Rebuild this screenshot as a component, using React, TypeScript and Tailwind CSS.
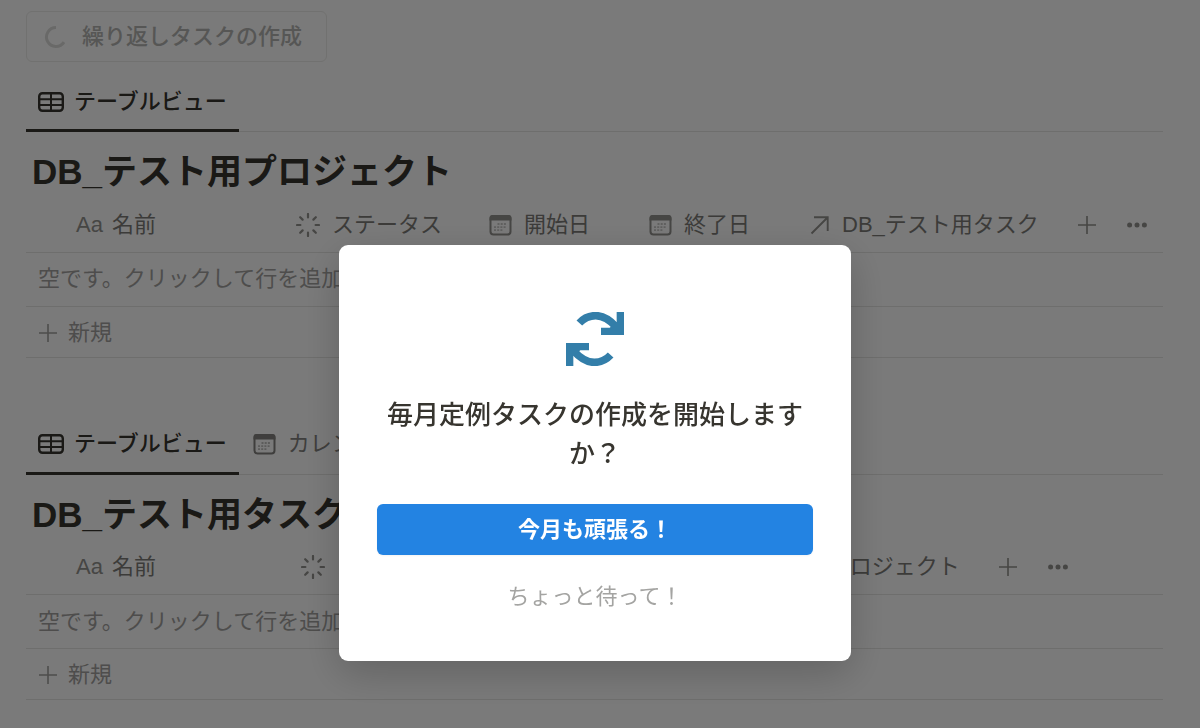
import type { ReactNode } from "react";

type Column = {
  label: string;
  icon: ReactNode;
  width: string;
};

function TableIcon() {
  return (
    <svg className="w-[26px] h-5 shrink-0" viewBox="0 0 26 20" fill="none" stroke="currentColor">
      <rect x="1.2" y="1.2" width="23.6" height="17.6" rx="3.2" strokeWidth={2.4} />
      <path d="M1.2 7.2h23.6M1.2 13h23.6M13 1.2v17.6" strokeWidth={2} />
    </svg>
  );
}

function CalendarIcon() {
  return (
    <svg className="w-[23px] h-[22px] shrink-0" viewBox="0 0 23 22" fill="none">
      <rect x="1.500" y="2" width="20" height="18.500" rx="3" stroke="currentColor" strokeWidth={2} />
      <path d="M0.500 6.500V4a3 3 0 013-3h16a3 3 0 013 3v2.500z" fill="currentColor" />
      <path d="M8.500 10h9M5 13.200h12.500M5 16.200h9" stroke="currentColor" strokeWidth={1.8} strokeDasharray="2 1.200" opacity={0.5} />
    </svg>
  );
}

function StatusIcon() {
  return (
    <svg className="size-6 shrink-0" viewBox="0 0 24 24" fill="none" stroke="currentColor" strokeWidth={2.2} strokeLinecap="round">
      <path d="M12 1v3.400M12 19.600V23M1 12h3.400M19.600 12H23M4.200 4.200l2.400 2.400M17.400 17.400l2.400 2.400M19.800 4.200l-2.400 2.400M6.600 17.400l-2.400 2.400" />
    </svg>
  );
}

function RelationIcon() {
  return (
    <svg className="size-5 shrink-0" viewBox="0 0 20 20" fill="none" stroke="currentColor" strokeWidth={1.9}>
      <path d="M1.500 18.500L17.500 2.500M4 2.300h13.700V16" />
    </svg>
  );
}

function PlusIcon() {
  return (
    <svg className="size-5 shrink-0" viewBox="0 0 20 20" fill="none" stroke="currentColor" strokeWidth={1.6}>
      <path d="M10 1v18M1 10h18" />
    </svg>
  );
}

function DotsIcon() {
  return (
    <svg className="w-5 h-[18px] shrink-0" viewBox="0 0 20 18" fill="currentColor">
      <circle cx="2.600" cy="9" r="2.500" />
      <circle cx="10" cy="9" r="2.500" />
      <circle cx="17.400" cy="9" r="2.500" />
    </svg>
  );
}

function SpinnerIcon() {
  return (
    <svg className="size-6 shrink-0" viewBox="0 0 24 24" fill="none" strokeWidth={3}>
      <path d="M12 2.500a9.500 9.500 0 108 14.600" stroke="#dcdcda" />
    </svg>
  );
}

function RepeatIcon() {
  return (
    <svg className="w-[58px] h-[54px] text-[#337ea9]" viewBox="0 0 174 162" fill="none">
      <g id="repeat-half">
        <path d="M40 33C54 18 70 11 89 11c24 0 42 12 62 34" stroke="currentColor" strokeWidth={23} />
        <path d="M152 0h22v69h-69V47h26l21-17z" fill="currentColor" />
      </g>
      <use href="#repeat-half" transform="rotate(180 87 81)" />
    </svg>
  );
}

const textIcon = <span className="w-6">Aa</span>;

const projectColumns: Column[] = [
  { label: "名前", icon: textIcon, width: "w-[258px]" },
  { label: "ステータス", icon: <StatusIcon />, width: "w-[193px]" },
  { label: "開始日", icon: <CalendarIcon />, width: "w-[160px]" },
  { label: "終了日", icon: <CalendarIcon />, width: "w-[161px]" },
  { label: "DB_テスト用タスク", icon: <RelationIcon />, width: "w-[265px]" },
];

const taskColumns: Column[] = [
  { label: "名前", icon: textIcon, width: "w-[263px]" },
  { label: "ステータス", icon: <StatusIcon />, width: "w-[364px]" },
  { label: "DB_テスト用プロジェクト", icon: <RelationIcon />, width: "w-[331px]" },
];

function Database({ title, columns, calendar }: { title: string; columns: Column[]; calendar?: boolean }) {
  return (
    <section>
      <nav className="flex h-[62px] border-b border-[#e6e6e4]">
        <button type="button" className="-mb-px flex items-center gap-2.5 border-b-[3px] border-[#37352f] px-3 pt-1 font-medium">
          <TableIcon />
          テーブルビュー
        </button>
        {calendar && (
          <button type="button" className="ml-0.5 flex items-center gap-3 px-3 pt-0.5 text-[#84837f]">
            <CalendarIcon />
            カレンダー
          </button>
        )}
      </nav>
      <h2 className="px-1.5 pt-[18px] pb-0.5 text-[35px] leading-[44px] font-bold">{title}</h2>
      <table className="w-full table-fixed border-collapse text-left">
        <thead>
          <tr className="h-14 border-b border-[#e6e6e4] text-[#7d7c78]">
            {columns.map((column, i) => (
              <th key={column.label} scope="col" className={`${column.width} pt-0.5 font-normal ${i === 0 ? "pl-[50px]" : "pl-3"}`}>
                <span className="flex items-center gap-3 whitespace-nowrap">
                  <span className="flex text-[#93928e]">{column.icon}</span>
                  {column.label}
                </span>
              </th>
            ))}
            <th scope="col" className="pt-0.5 pl-3.5 font-normal">
              <span className="flex items-center gap-[30px] text-[#93928e]">
                <button type="button" aria-label="プロパティを追加">
                  <PlusIcon />
                </button>
                <button type="button" aria-label="その他">
                  <DotsIcon />
                </button>
              </span>
            </th>
          </tr>
        </thead>
        <tbody className="text-[#a3a29f]">
          <tr className="h-[54px] border-b border-[#e6e6e4]">
            <td colSpan={columns.length + 1} className="pl-3">空です。クリックして行を追加</td>
          </tr>
          <tr className="h-[51px] border-b border-[#e6e6e4]">
            <td colSpan={columns.length + 1} className="pt-0.5 pl-3">
              <button type="button" className="flex items-center gap-2.5">
                <PlusIcon />
                新規
              </button>
            </td>
          </tr>
        </tbody>
      </table>
    </section>
  );
}

function ConfirmDialog() {
  return (
    <div className="fixed inset-0 flex items-start justify-center bg-black/52 pt-[245px] pr-2.5">
      <div
        role="dialog"
        aria-modal="true"
        aria-labelledby="confirm-title"
        className="flex w-[512px] flex-col items-center rounded-[9px] bg-white px-[38px] pt-[67px] pb-[42px] shadow-[0_12px_40px_rgba(0,0,0,0.2)]"
      >
        <RepeatIcon />
        <p id="confirm-title" className="mt-[30px] text-center text-[26px] leading-[39px] font-medium">
          毎月定例タスクの作成を開始しますか？
        </p>
        <button type="button" className="mt-[30px] h-[51px] w-full rounded-md bg-[#2383e2] font-bold text-white shadow-xs">
          今月も頑張る！
        </button>
        <button type="button" className="mt-5 h-11 w-full text-[#a4a4a2]">
          ちょっと待って！
        </button>
      </div>
    </div>
  );
}

export default function App() {
  return (
    <div lang="ja" className="min-h-screen bg-white font-['Liberation_Sans','Noto_Sans_CJK_JP',sans-serif] text-[22px] leading-8 text-[#37352f]">
      <main className="pt-[11px] pr-[37px] pl-[26px]">
        <button type="button" disabled className="flex h-[51px] items-center gap-3.5 rounded-md border border-[#ececea] px-[17px] pr-6 text-[#b4b4b1]">
          <SpinnerIcon />
          <span className="font-medium">繰り返しタスクの作成</span>
        </button>
        <div className="mt-2 flex flex-col gap-[55px]">
          <Database title="DB_テスト用プロジェクト" columns={projectColumns} />
          <Database title="DB_テスト用タスク" columns={taskColumns} calendar />
        </div>
      </main>
      <ConfirmDialog />
    </div>
  );
}
